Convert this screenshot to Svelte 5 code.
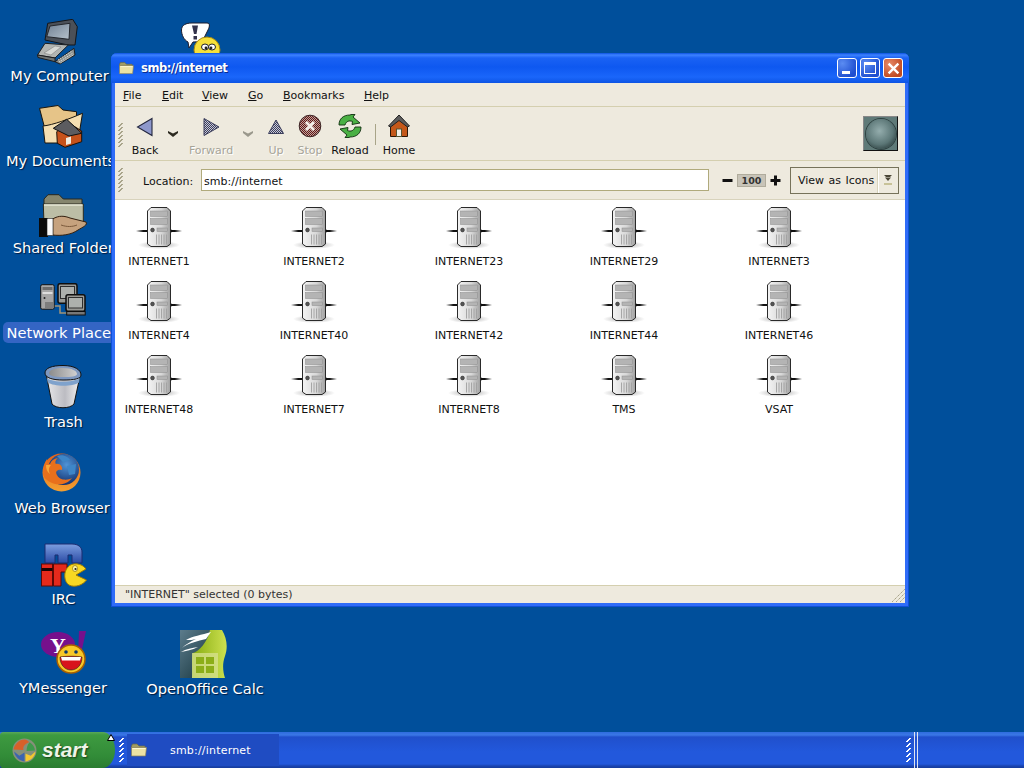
<script>
  const desk = [
    { name: 'My Computer', cx: 59.5, ly: 65, icon: 'computer', x: 37, y: 19, w: 41, h: 46 },
    { name: 'My Documents', cx: 60.5, ly: 150, icon: 'docs', x: 39, y: 105, w: 44, h: 43 },
    { name: 'Shared Folders', cx: 67, ly: 237, icon: 'shared', x: 39, y: 194, w: 49, h: 43 },
    { name: 'Network Places', cx: 62.5, ly: 322, icon: 'net', x: 40, y: 283, w: 46, h: 33, sel: true },
    { name: 'Trash', cx: 63.5, ly: 411, icon: 'trash', x: 44, y: 365, w: 38, h: 44 },
    { name: 'Web Browser', cx: 62, ly: 497, icon: 'fox', x: 42, y: 453, w: 39, h: 39 },
    { name: 'IRC', cx: 63.5, ly: 588, icon: 'irc', x: 41, y: 543, w: 46, h: 44 },
    { name: 'YMessenger', cx: 63, ly: 677, icon: 'yahoo', x: 41, y: 631, w: 45, h: 43 },
    { name: 'OpenOffice Calc', cx: 205, ly: 678, icon: 'calc', x: 180, y: 630, w: 47, h: 48 }
  ];
  const menus = ['File', 'Edit', 'View', 'Go', 'Bookmarks', 'Help'];
  const hosts = ['INTERNET1','INTERNET2','INTERNET23','INTERNET29','INTERNET3','INTERNET4','INTERNET40','INTERNET42','INTERNET44','INTERNET46','INTERNET48','INTERNET7','INTERNET8','TMS','VSAT'];
  const grip = [0, 1, 2, 3, 4, 5];
</script>

{#snippet folderIcon()}
  <svg class="fold" viewBox="0 0 16 14">
    <path d="M.5 3 L1.500 1 H6 L8 3 H14 V5 H.5Z" fill="#a09c64" stroke="#6c6a42" stroke-width=".7"/>
    <path d="M.5 13 L.5 4.500 H15.500 L14.500 13Z" fill="#ece2a4" stroke="#86805a" stroke-width=".7"/>
    <path d="M1.500 5.500 H14.500" stroke="#fff8d0" stroke-width="1"/>
  </svg>
{/snippet}

{#snippet gripLines()}
  <div class="grip">
    {#each grip as g (g)}<i></i>{/each}
  </div>
{/snippet}

{#snippet dropArrow()}
  <svg class="drop" viewBox="0 0 10 7"><path d="M0 1 L5 3.500 L10 1 V3 L5 7 L0 3Z"/></svg>
{/snippet}

{#snippet server()}
  <svg class="server" viewBox="0 0 46 42">
    <ellipse cx="23" cy="38" rx="21" ry="4" fill="url(#srv-shadow)"/>
    <rect x="0" y="23" width="12" height="2" fill="url(#wire)"/>
    <rect x="34" y="23" width="12" height="2" fill="url(#wire2)"/>
    <path d="M34 21.500 L37 24 L34 26.500Z" fill="#111"/>
    <path d="M11.500 4 L15 .5 H31 L34.500 4 V37 L31 39.500 H15 L11.500 37Z" fill="url(#srv)" stroke="#2a2a2a" stroke-width="1"/>
    <rect x="14.500" y="4" width="17" height="5.500" fill="#b4b4b4" stroke="#8c8c8c" stroke-width=".5"/>
    <rect x="14.500" y="11.500" width="17" height="6" fill="#b4b4b4" stroke="#8c8c8c" stroke-width=".5"/>
    <circle cx="16.500" cy="23" r="1.900" fill="#555" stroke="#222" stroke-width=".5"/>
    <rect x="21" y="21" width="10.500" height="3.500" fill="#b4b4b4" stroke="#8c8c8c" stroke-width=".5"/>
    <path d="M20.500 27.500 V37.500 M23 27.500 V37.500 M25.500 27.500 V37.500 M28 27.500 V37.500 M30.500 27.500 V37.500" stroke="#a0a0a0" stroke-width=".9"/>
  </svg>
{/snippet}

{#snippet deskIcon(kind)}
  {#if kind === 'computer'}
    <svg viewBox="0 0 41 46">
      <path d="M10.700 4.300 L35.700 .3 L40.300 7.700 L38 26 H31 L8 21Z" fill="#4b5058" stroke="#14161a"/>
      <path d="M13 7 L33 4.300 L32 20.300 L9.700 17.700Z" fill="url(#scr)" stroke="#23262c"/>
      <path d="M.5 36 L8 24.300 L31.300 26 L18 39Z" fill="#b2b5b2" stroke="#1c1e20"/>
      <path d="M.5 36 L18 39 L18 42.700 L1 38.500Z" fill="#6f7372" stroke="#1c1e20"/>
      <path d="M7 34 L18 27 L24 28 L14 36Z" fill="#d6d8d4" stroke="#777" stroke-width=".5"/>
      <path d="M18 42.700 L37 29.300 L38 36 L23 45Z" fill="#8d918f" stroke="#1c1e20"/>
      <path d="M21 41 L35 32 M22 43 L36 34 M23.500 44 L37 35.500" stroke="#e6e8e4" stroke-width=".8" stroke-dasharray="1.500 .8"/>
    </svg>
  {:else if kind === 'docs'}
    <svg viewBox="0 0 44 43">
      <path d="M.5 3.300 L19 .5 L24 5 L37.500 6.700 V12 L7.500 30Z" fill="#e6c488" stroke="#1a150d"/>
      <path d="M6 38 L4 21 C14 20 30 14 43.500 8.300 L40 30 L22 38Z" fill="#f5dfb2" stroke="#1a150d"/>
      <path d="M17.700 26.700 L18.300 38.300 L26 42.300 L42.700 36.700 V26 L30 18Z" fill="#c6521b" stroke="#1c1106"/>
      <path d="M14.300 23.300 L27.700 14.300 L42.700 28.300 L30 31 Z" fill="#5c5c60" stroke="#111"/>
      <path d="M27 33 L32 31.500 V38.500 L27 40Z" fill="#f0ece0"/>
    </svg>
  {:else if kind === 'shared'}
    <svg viewBox="0 0 49 43">
      <path d="M5 5 L9 .7 H20 L24.300 5 H43 V11 H5Z" fill="#86866e" stroke="#28281f"/>
      <path d="M5 30 L4.300 10 H44.300 V30Z" fill="#bcbea6" stroke="#28281f"/>
      <path d="M5 11 H43.500" stroke="#e8e8d6" stroke-width="1.500"/>
      <path d="M13.700 25 C20 21 26 22 31 24 L47 28 C49 31 44 33 39 36 C32 41 22 42 13.700 41Z" fill="#c6a27e" stroke="#34200f"/>
      <path d="M22 31 C28 33 33 33 38 31" stroke="#7c5a3c" fill="none"/>
      <rect x="0" y="24" width="9" height="19" fill="#0a0a0a"/>
      <rect x="8" y="24.500" width="6" height="17" fill="#fafafa" stroke="#222" stroke-width=".6"/>
    </svg>
  {:else if kind === 'net'}
    <svg viewBox="0 0 46 33">
      <path d="M14 23 H20 V30 H27" fill="none" stroke="#a09478" stroke-width="1.500"/>
      <rect x=".7" y="1.700" width="13.500" height="24.500" rx="1.500" fill="#a6a6a6" stroke="#111"/>
      <rect x="2.500" y="4" width="10" height="3" fill="#6c6c6c"/><rect x="2.500" y="9" width="10" height="2" fill="#dcdcdc"/>
      <circle cx="4.500" cy="15" r="1" fill="#222"/>
      <path d="M6 19 V25 M8 19 V25 M10 19 V25 M12 19 V25" stroke="#555"/>
      <rect x="18" y=".7" width="19" height="19.500" rx="2" fill="#989894" stroke="#0e0e0e" stroke-width="1.500"/>
      <rect x="20.500" y="3.500" width="14" height="12" fill="#adb0ad" stroke="#2e2e2e"/>
      <rect x="26" y="11.700" width="19" height="16.500" rx="2" fill="#989894" stroke="#0e0e0e" stroke-width="1.500"/>
      <rect x="28.500" y="14.500" width="14" height="10.500" fill="#adb0ad" stroke="#2e2e2e"/>
      <rect x="26.700" y="28.500" width="18.500" height="3.500" fill="#777" stroke="#0e0e0e"/>
    </svg>
  {:else if kind === 'trash'}
    <svg viewBox="0 0 38 44">
      <path d="M2.500 11 L8 39 C12 44 26 44 30 39 L36 11Z" fill="url(#tr)" stroke="#111"/>
      <path d="M1 8 C1 3 8 .5 19 .5 C31 .5 37 5 37 10 C37 14 30 15 19 15 C9 15 1 13 1 8Z" fill="#7e98c0" stroke="#111"/>
      <path d="M5 8 C5 5 11 3 19 3 C28 3 33 6 33 9 C33 11.500 27 12 19 12 C11 12 5 11 5 8Z" fill="url(#trin)"/>
      <path d="M2.800 13 C10 18 28 18 35.800 13 L35 17.500 C28 22 10 21.500 3.700 17.500Z" fill="#7fa2cc"/>
    </svg>
  {:else if kind === 'fox'}
    <svg viewBox="0 0 39 39">
      <circle cx="19.500" cy="19.500" r="19" fill="url(#fxo)"/>
      <circle cx="21.500" cy="16.500" r="15.500" fill="url(#gl)"/>
      <path d="M15 3 C19 1 26 3 28 7 L21 9Z M25 13 L34 11 L33 21 L27 22Z" fill="#3e86c8"/>
      <path d="M1 20 C1 15 2 10 5 6 C5 9 6 10.500 8 11 C9 8 12 5.500 16 5 C13 7 13 10 14 11 C18 10 21 14 20 17 C15 16 13 19 15 22 C17 27 25 28 30 25 C25 32 15 33 8 29 C4 27 1 24 1 20Z" fill="#e8701c"/>
      <path d="M4 12 C4 16 5 19 8 21 C6 17 7 14 9 12Z" fill="#f8a838"/>
    </svg>
  {:else if kind === 'irc'}
    <svg viewBox="0 0 46 44">
      <path d="M4 1 H31 C37 1 41 4 41 9 V20 H31 V12 H27 V20 H17 V12 H14 V20 H4Z" fill="url(#mb)" stroke="#1c2c70"/>
      <rect x=".5" y="21" width="11" height="22" fill="#e42a1c" stroke="#5c0a06"/>
      <rect x=".5" y="25" width="11" height="3" fill="#1a0504"/>
      <path d="M12.500 21 H26 V29 H20 V43 H12.500Z" fill="#e42a1c" stroke="#5c0a06"/>
      <path d="M45 26 C41 20 31 19 27 24 C22 29 23 39 28 42 C34 45 42 42 45.500 37 L35 32Z" fill="#f8d822" stroke="#a07a00"/>
      <ellipse cx="34" cy="25.500" rx="2.500" ry="3" fill="#fff4a0" stroke="#5c4400" stroke-width=".5"/>
      <circle cx="34.500" cy="26" r="1.100" fill="#222"/>
    </svg>
  {:else if kind === 'yahoo'}
    <svg viewBox="0 0 45 43">
      <ellipse cx="17" cy="13.500" rx="17" ry="12.500" fill="#76108c"/>
      <text x="17" y="22" class="y-text">Y</text>
      <path d="M38 0 H45 L40 23 H37Z" fill="#76108c"/>
      <circle cx="30" cy="28" r="14" fill="#f8c828" stroke="#a86000" stroke-width="1.500"/>
      <circle cx="25" cy="21" r="1.800" fill="#0d3a70"/><circle cx="35" cy="21" r="1.800" fill="#0d3a70"/>
      <path d="M19 26 C24 25 36 25 41 26 C41 34 36 39 30 39 C24 39 19 34 19 26Z" fill="#d8141c" stroke="#222" stroke-width=".6"/>
      <path d="M20 26 H40 L39 29.500 H21Z" fill="#fff"/>
    </svg>
  {:else if kind === 'calc'}
    <svg viewBox="0 0 47 48">
      <path d="M0 0 H34 L14 48 H0Z" fill="url(#cd)"/>
      <path d="M30 0 H42 C47 8 48 18 45 26 C42 34 43 42 45 48 H12 C13 40 11 30 13 23 C18 22 28 12 30 0Z" fill="url(#cg)"/>
      <path d="M2 18 C8 13 18 11 26 9 L31 2 C22 5 12 6 6 10 C10 10 13 10 16 9 C10 12 6 14 2 18Z" fill="#fff"/>
      <path d="M1 22 C6 19 12 18 18 17 C12 20 6 21 1 22Z" fill="#fff"/>
      <rect x="12" y="23" width="26" height="25" fill="#d4e08c" opacity=".8"/>
      <path d="M16 27 H24 V34 H16Z M26 27 H34 V34 H26Z M16 36 H24 V43 H16Z M26 36 H34 V43 H26Z" fill="#8cae18"/>
    </svg>
  {/if}
{/snippet}

<div class="desktop">
  <svg class="pattern-defs" width="0" height="0">
    <defs>
      <pattern id="dith-blue" width="2" height="2" patternUnits="userSpaceOnUse">
        <rect width="2" height="2" fill="#c8c8d8"/><rect width="1" height="1" fill="#3c3f5c"/><rect x="1" y="1" width="1" height="1" fill="#3c3f5c"/>
      </pattern>
      <pattern id="dith-red" width="2" height="2" patternUnits="userSpaceOnUse">
        <rect width="2" height="2" fill="#b8a8a0"/><rect width="1" height="1" fill="#6a1414"/><rect x="1" y="1" width="1" height="1" fill="#6a1414"/>
      </pattern>
      <linearGradient id="srv" x1="0" x2="1"><stop offset="0" stop-color="#f4f4f4"/><stop offset=".6" stop-color="#d8d8d8"/><stop offset="1" stop-color="#a0a0a0"/></linearGradient>
      <radialGradient id="srv-shadow"><stop offset="0" stop-color="#aaa"/><stop offset="1" stop-color="#fff"/></radialGradient>
      <linearGradient id="wire" x1="0" x2="1"><stop offset="0" stop-color="#fff"/><stop offset=".6" stop-color="#111"/><stop offset="1" stop-color="#111"/></linearGradient>
      <linearGradient id="wire2" x1="1" x2="0"><stop offset="0" stop-color="#fff"/><stop offset=".6" stop-color="#111"/><stop offset="1" stop-color="#111"/></linearGradient>
      <linearGradient id="scr" x1="0" y1="0" x2="1" y2="1"><stop offset="0" stop-color="#6f7f92"/><stop offset="1" stop-color="#b6c2cc"/></linearGradient>
      <linearGradient id="tr" x1="0" x2="1"><stop offset="0" stop-color="#e8e8ea"/><stop offset=".55" stop-color="#bcbcc2"/><stop offset="1" stop-color="#f2f2f2"/></linearGradient>
      <linearGradient id="trin" x1="0" x2="1"><stop offset="0" stop-color="#8c8c8c"/><stop offset="1" stop-color="#d0d0d0"/></linearGradient>
      <radialGradient id="gl" cx=".6" cy=".35" r=".65"><stop offset="0" stop-color="#4f94d8"/><stop offset="1" stop-color="#12306e"/></radialGradient>
      <linearGradient id="fxo" x1="0" y1="0" x2="0" y2="1"><stop offset="0" stop-color="#e0601a"/><stop offset="1" stop-color="#f4a030"/></linearGradient>
      <linearGradient id="mb" x1="0" y1="0" x2="0" y2="1"><stop offset="0" stop-color="#7c9ee0"/><stop offset="1" stop-color="#2a4aa4"/></linearGradient>
      <linearGradient id="cg" x1="0" x2="1"><stop offset="0" stop-color="#86ac10"/><stop offset="1" stop-color="#cce050"/></linearGradient>
      <linearGradient id="cd" x1="0" y1="0" x2="1" y2="1"><stop offset="0" stop-color="#5c7c8c"/><stop offset="1" stop-color="#123038"/></linearGradient>
    </defs>
  </svg>

  <svg class="msg" width="40" height="42" viewBox="0 0 40 42">
    <path d="M.5 8 C.5 3 5 1 11 1 H26 C29 1 29 4 27 8 L23 16 C21 19 17 20 12 20 L8 26 L7 20 C3 18 .5 13 .5 8Z" fill="#fff" stroke="#1c1c2c" stroke-width="1"/>
    <path d="M11 3.500 H17 L15.500 12 H13Z M12.500 14 H16 V17.500 H12.500Z" fill="#33334c"/>
    <circle cx="26" cy="28" r="13" fill="#f6e03a" stroke="#a88a10"/>
    <ellipse cx="24" cy="25" rx="3.500" ry="3" fill="#fff" stroke="#222"/>
    <ellipse cx="31" cy="25" rx="3.500" ry="3" fill="#fff" stroke="#222"/>
    <circle cx="25" cy="26" r="1.400" fill="#222"/><circle cx="30" cy="26" r="1.400" fill="#222"/>
  </svg>

  {#each desk as d (d.name)}
    <div class="di" style="left:{d.x}px;top:{d.y}px;width:{d.w}px;height:{d.h}px">{@render deskIcon(d.icon)}</div>
    <span class="dl" class:sel={d.sel} style="left:{d.cx}px;top:{d.ly}px">{d.name}</span>
  {/each}

  <section class="window">
    <header class="title">
      {@render folderIcon()}
      <span class="title-text">smb://internet</span>
      <div class="wbtns">
        <button class="wb min" aria-label="Minimize"><i></i></button>
        <button class="wb max" aria-label="Maximize"><i></i></button>
        <button class="wb close" aria-label="Close">
          <svg viewBox="0 0 12 12"><path d="M1.500 1.500 L10.500 10.500 M10.500 1.500 L1.500 10.500" stroke="#fff" stroke-width="2.200"/></svg>
        </button>
      </div>
    </header>

    <div class="client">
      <nav class="menubar">
        {#each menus as m (m)}
          <span class="menu"><u>{m[0]}</u>{m.slice(1)}</span>
        {/each}
      </nav>

      <div class="toolbar">
        {@render gripLines()}
        <div class="tool t-back">
          <svg class="ti" viewBox="0 0 24 24"><path d="M19 4.500 V21.500 L4.500 13Z" fill="#8e98cc" stroke="#23273f" stroke-width="1.100"/></svg>
          <span>Back</span>
        </div>
        <div class="darr">{@render dropArrow()}</div>
        <div class="tool t-fwd off">
          <svg class="ti" viewBox="0 0 24 24"><path d="M5 4.500 V21.500 L20 13Z" fill="url(#dith-blue)" stroke="#3c3f5c" stroke-width="1"/></svg>
          <span>Forward</span>
        </div>
        <div class="darr d2 off">{@render dropArrow()}</div>
        <div class="tool t-up off">
          <svg class="ti" viewBox="0 0 24 24"><path d="M12 6 L19.500 19.500 H4.500Z" fill="url(#dith-blue)" stroke="#3c3f5c" stroke-width="1"/></svg>
          <span>Up</span>
        </div>
        <div class="tool t-stop off">
          <svg class="ti" viewBox="0 0 24 24"><circle cx="12" cy="12" r="10.800" fill="url(#dith-red)" stroke="#3c2424"/><path d="M8 8 L16 16 M16 8 L8 16" stroke="#f4eee8" stroke-width="2.800"/></svg>
          <span>Stop</span>
        </div>
        <div class="tool t-reload">
          <svg class="ti" viewBox="0 0 24 24">
            <path d="M1 11 C1 5 5 1 12 1 L13 .5 L17 .5 L15 3 L22 9 L14 10.500 L14.500 7.500 C11 6 8 7.500 7 11Z" fill="#4ab044" stroke="#0e2c0e" stroke-width=".9"/>
            <path d="M23 13 C23 19 19 23 12 23 L11 23.500 L7 23.500 L9 21 L2 15 L10 13.500 L9.500 16.500 C13 18 16 16.500 17 13Z" fill="#4ab044" stroke="#0e2c0e" stroke-width=".9"/>
          </svg>
          <span>Reload</span>
        </div>
        <div class="tsep"></div>
        <div class="tool t-home">
          <svg class="ti" viewBox="0 0 24 24">
            <path d="M3.500 11 V22.500 H20.500 V11 L12 4Z" fill="#c4581a" stroke="#2a1608"/>
            <path d="M1.500 12 L12 1 L22.500 12 L20.500 13 L12 6.500 L3.500 13Z" fill="#5c5c5c" stroke="#222"/>
            <rect x="9.500" y="15" width="5" height="7.500" fill="#f2f0e8" stroke="#553"/>
          </svg>
          <span>Home</span>
        </div>
        <div class="spacer"></div>
        <div class="throbber"><i></i></div>
      </div>

      <div class="locbar">
        {@render gripLines()}
        <label class="loc-label" for="loc">Location:</label>
        <input id="loc" class="loc" value="smb://internet" readonly />
        <div class="zoom">
          <svg class="zi" viewBox="0 0 11 11"><rect x="0.500" y="4" width="10" height="3"/></svg>
          <span class="zv">100</span>
          <svg class="zi" viewBox="0 0 11 11"><path d="M4 .5 H7 V4 H10.500 V7 H7 V10.500 H4 V7 H.5 V4 H4Z"/></svg>
        </div>
        <div class="combo">
          <span class="combo-text">View as Icons</span>
          <span class="combo-btn">
            <svg viewBox="0 0 8 10"><path d="M0 0 H8 L6 2 H2Z M1 2.500 H7 L4 6Z" fill="#4a4636"/><rect y="8" width="8" height="2" fill="#c8c298"/></svg>
          </span>
        </div>
      </div>

      <main class="files">
        {#each hosts as h (h)}
          <div class="file">
            {@render server()}
            <span>{h}</span>
          </div>
        {/each}
      </main>

      <footer class="status">
        <span>"INTERNET" selected (0 bytes)</span>
        <svg class="resize" viewBox="0 0 14 14"><path d="M1 14 L14 1 M5 14 L14 5 M9 14 L14 9" stroke="#a8a488" stroke-dasharray="1.500 .6" fill="none"/></svg>
      </footer>
    </div>
  </section>

  <div class="taskbar">
    <div class="start">
      <svg class="logo" viewBox="0 0 24 24">
        <circle cx="12" cy="12" r="11.500" fill="#86907a"/>
        <path d="M12 1.500 C7 1.500 2.500 6 1.500 11 L11 11.500 C10 8 13 5 16.500 4 C15 2.500 13.500 1.500 12 1.500Z" fill="#d8602a"/>
        <path d="M17 4 C20 6 22 9 22 12 L14 12.500 C14 9 15 6 17 4Z" fill="#3f9a4c"/>
        <path d="M22.500 13 C22 18 18 22 13 22.500 L13 15 L18 17Z" fill="#f4c830"/>
        <path d="M2 13 C3 18 7 22 12 22.500 L12 14 L7 17Z" fill="#3c64b0"/>
      </svg>
      <span>start</span>
      <svg class="up" viewBox="0 0 8 7"><path d="M4 .5 L7.500 6.500 H.5Z" fill="#fff" stroke="#000"/></svg>
    </div>
    <div class="tb-grip">{#each [0,1,2,3,4] as g (g)}<i></i>{/each}</div>
    <div class="task">
      {@render folderIcon()}
      <span>smb://internet</span>
    </div>
    <div class="spacer"></div>
    <div class="tb-grip">{#each [0,1,2,3,4] as g (g)}<i></i>{/each}</div>
    <div class="tb-sep"></div>
    <div class="tray"></div>
  </div>
</div>

<style>
  :global(body) { margin: 0; }
  .desktop {
    position: relative;
    width: 1024px;
    height: 768px;
    overflow: hidden;
    background: #004f9b;
    font-family: "DejaVu Sans", sans-serif;
    font-size: 11px;
  }
  .pattern-defs { position: absolute; }
  .msg { position: absolute; left: 181px; top: 22px; }
  .di { position: absolute; }
  .di svg { display: block; width: 100%; height: 100%; }
  .y-text {
    font-family: "Liberation Serif", serif;
    font-weight: bold;
    font-size: 22px;
    fill: #fff;
    text-anchor: middle;
  }
  .dl {
    position: absolute;
    transform: translateX(-50%);
    color: #fff;
    font-size: 14.6px;
    line-height: 21px;
    white-space: nowrap;
    padding: 0 4px;
    border-radius: 5px;
    text-shadow: 1px 1px 1px #00183c;
  }
  .dl.sel { background: #3465c4; text-shadow: none; }

  .window {
    position: absolute;
    left: 111px;
    top: 53px;
    width: 798px;
    height: 554px;
    display: flex;
    flex-direction: column;
    border-radius: 6px 6px 0 0;
    background: #2f6cf8;
    box-shadow: inset 0 0 0 1px #0f50d8;
  }
  .title {
    height: 30px;
    flex: none;
    display: flex;
    align-items: center;
    padding: 0 6px 0 8px;
    color: #fff;
    border-radius: 6px 6px 0 0;
    background: linear-gradient(#0a52e0 0, #3d82ff 2px, #1a62f4 5px, #0e58f0 14px, #1a66fa 24px, #0d54e4 30px);
  }
  .title .fold { width: 15px; height: 14px; }
  .title-text {
    margin-left: 7px;
    font-weight: bold;
    font-size: 11.5px;
    letter-spacing: -.45px;
    text-shadow: 1px 1px 0 #0a2c90;
  }
  .wbtns { margin-left: auto; display: flex; gap: 3px; }
  .wb {
    width: 20px;
    height: 20px;
    padding: 0;
    border: 1px solid #fff;
    border-radius: 3px;
    background: radial-gradient(circle at 25% 25%, #5b8cf2, #1f4fd0 75%);
    display: flex;
    align-items: center;
    justify-content: center;
    position: relative;
  }
  .wb.min i { position: absolute; left: 4px; bottom: 3px; width: 8px; height: 3px; background: #fff; }
  .wb.max i { width: 10px; height: 8px; border: 1px solid #fff; border-top-width: 3px; }
  .wb.close { background: radial-gradient(circle at 30% 30%, #e88a68, #c04a22 75%); }
  .wb.close svg { width: 13px; height: 13px; }

  .client {
    flex: 1;
    min-height: 0;
    margin: 0 4px 4px;
    display: flex;
    flex-direction: column;
    background: #eeeade;
    color: #111;
  }
  .menubar {
    flex: none;
    display: flex;
    align-items: center;
    border-bottom: 1px solid #d4cfaf;
    padding: 1px 0 0 8px;
    height: 22px;
  }
  .menu { margin-right: 19px; flex: none; }
  .menu:nth-child(1) { width: 20px; }
  .menu:nth-child(2) { width: 21px; }
  .menu:nth-child(3) { width: 27px; }
  .menu:nth-child(4) { width: 16px; }
  .menu:nth-child(5) { width: 62px; }

  .toolbar {
    height: 53px;
    flex: none;
    display: flex;
    align-items: flex-start;
    border-bottom: 1px solid #d4cfaf;
  }
  .grip { display: flex; flex-direction: column; width: 9px; margin: 16px 0 0 3px; flex: none; }
  .grip i {
    display: block;
    width: 5px;
    height: 4px;
    background: linear-gradient(135deg, transparent 38%, #a8a48a 38%, #a8a48a 62%, transparent 62%);
  }
  .tool { display: flex; flex-direction: column; align-items: center; flex: none; }
  .tool span { line-height: 14px; white-space: nowrap; }
  .ti { width: 24px; height: 24px; display: block; margin-top: 7px; margin-bottom: 6px; }
  .off span { color: #a6a498; text-shadow: 1px 1px 0 #fff; }
  .t-back { width: 36px; }
  .darr { width: 10px; margin: 23px 0 0 5px; flex: none; }
  .drop { display: block; width: 10px; height: 7px; fill: #2c2a20; }
  .darr.off .drop { fill: #9a988c; }
  .t-fwd { margin-left: 9px; width: 48px; }
  .darr.d2 { margin-left: 8px; }
  .t-up { margin-left: 9px; width: 28px; }
  .t-stop { margin-left: 5px; width: 30px; }
  .t-reload { margin-left: 5px; width: 40px; }
  .tsep { width: 1px; height: 21px; background: #a8a488; margin: 17px 0 0 5px; flex: none; }
  .t-home { margin-left: 1px; width: 44px; }
  .spacer { flex: 1; }
  .throbber {
    width: 35px;
    height: 35px;
    margin: 9px 7px 0 0;
    box-sizing: border-box;
    background: #5f7a78;
    border: 1px solid #111;
    border-left-color: #888;
    border-top-color: #888;
    display: flex;
    align-items: center;
    justify-content: center;
  }
  .throbber i {
    width: 30px;
    height: 30px;
    border-radius: 50%;
    background: radial-gradient(circle at 45% 40%, #94adad, #5b7676 55%, #2a3c3c 85%);
    box-shadow: 0 0 0 1px #2f4242;
  }

  .locbar {
    height: 38px;
    flex: none;
    display: flex;
    align-items: center;
    border-bottom: 1px solid #d8d3bc;
  }
  .locbar .grip { margin-top: 0; }
  .loc-label { margin-left: 16px; width: 58px; flex: none; padding-top: 2px; }
  .loc {
    width: 508px;
    height: 22px;
    box-sizing: border-box;
    border: 1px solid #b0aa7c;
    padding: 2px 2px 0;
    font: inherit;
    color: #111;
    background: #fff;
    outline: none;
    flex: none;
    letter-spacing: .05px;
  }
  .zoom { display: flex; align-items: center; margin-left: 13px; flex: none; }
  .zi { width: 11px; height: 11px; fill: #111; }
  .zv {
    width: 29px;
    height: 13px;
    margin: 0 4px;
    background: #c8c4b8;
    border: 1px solid #b0ac9c;
    box-sizing: border-box;
    font-size: 9.5px;
    font-weight: bold;
    line-height: 11px;
    text-align: center;
    color: #333;
  }
  .combo {
    margin-left: 9px;
    width: 109px;
    height: 27px;
    box-sizing: border-box;
    border: 1px solid #76725a;
    display: flex;
    align-items: center;
    flex: none;
  }
  .combo-text { flex: 1; padding: 1px 0 0 7px; white-space: nowrap; word-spacing: 1px; }
  .combo-btn {
    width: 21px;
    height: 100%;
    border-left: 1px solid #d8d4bc;
    box-shadow: inset 1px 0 0 #fff;
    display: flex;
    align-items: center;
    justify-content: center;
    box-sizing: border-box;
  }
  .combo-btn svg { width: 8px; height: 10px; }

  .files {
    flex: 1;
    min-height: 0;
    background: #fff;
    display: grid;
    grid-template-columns: repeat(5, 88px);
    column-gap: 67px;
    grid-auto-rows: 74px;
    padding-top: 7px;
    align-content: start;
  }
  .file { display: flex; flex-direction: column; align-items: center; }
  .server { width: 46px; height: 42px; display: block; flex: none; }
  .file span { margin-top: 6px; line-height: 14px; white-space: nowrap; }

  .status {
    height: 17px;
    flex: none;
    border-top: 1px solid #d4cfaf;
    display: flex;
    align-items: center;
    padding-left: 10px;
    color: #333;
    position: relative;
  }
  .resize { position: absolute; right: 0; bottom: 1px; width: 14px; height: 14px; }

  .taskbar {
    position: absolute;
    left: 0;
    right: 0;
    bottom: 0;
    height: 36px;
    display: flex;
    align-items: stretch;
    background: linear-gradient(#2e6cde 0, #3a78e6 3px, #2050cc 5px, #2258dc 20px, #2258dc 32px, #1a44b0 34px, #163c9c 36px);
  }
  .start {
    width: 115px;
    flex: none;
    box-sizing: border-box;
    display: flex;
    align-items: center;
    padding-left: 12px;
    gap: 5px;
    border-radius: 4px 14px 14px 4px / 4px 20px 20px 4px;
    background: linear-gradient(#5aa85a 0, #3e9a40 3px, #328c38 24px, #2a7c30 36px);
    position: relative;
    color: #eef4e8;
  }
  .logo { width: 25px; height: 25px; }
  .start span {
    font-family: "Liberation Sans", sans-serif;
    font-size: 21px;
    font-style: italic;
    font-weight: bold;
    text-shadow: 1px 1px 2px #143c14;
  }
  .up { position: absolute; right: 0; top: 2px; width: 8px; height: 7px; }
  .tb-grip { width: 12px; display: flex; flex-direction: column; align-items: center; justify-content: center; gap: 1px; flex: none; }
  .tb-grip i {
    display: block;
    width: 5px;
    height: 4px;
    background: linear-gradient(135deg, transparent 35%, #fff 35%, #fff 65%, transparent 65%);
  }
  .task {
    width: 152px;
    flex: none;
    display: flex;
    align-items: center;
    box-sizing: border-box;
    padding-left: 4px;
    color: #fff;
    background: #1f4cc2;
    margin: 2px 0;
  }
  .task .fold { width: 16px; height: 14px; }
  .task span { margin-left: 23px; letter-spacing: .2px; }
  .tb-sep { width: 4px; flex: none; border-left: 1px solid #e0e4f0; border-right: 1px solid #e0e4f0; box-sizing: border-box; }
  .tray { width: 106px; flex: none; }
</style>
